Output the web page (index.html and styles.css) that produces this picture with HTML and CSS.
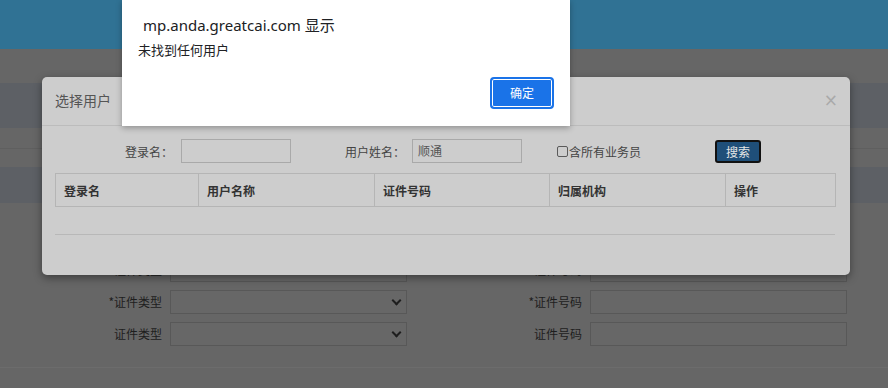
FILE: index.html
```html
<!DOCTYPE html>
<html lang="zh-CN">
<head>
  <meta charset="UTF-8">
  <title>选择用户</title>
  <link rel="stylesheet" href="styles.css">
</head>
<body>
  <div class="topbar"></div>

  <div class="page">
    <div class="band gap-top"></div>
    <div class="band tinted tall"></div>
    <div class="band short"></div>
    <div class="band mid"></div>
    <div class="band tinted mid2"></div>

    <div class="form-grid">
      <label class="lbl">证件类型</label>
      <div class="select"><span class="chev"></span></div>
      <label class="lbl">证件号码</label>
      <div class="field"></div>

      <label class="lbl">*证件类型</label>
      <div class="select"><span class="chev"></span></div>
      <label class="lbl">*证件号码</label>
      <div class="field"></div>

      <label class="lbl">证件类型</label>
      <div class="select"><span class="chev"></span></div>
      <label class="lbl">证件号码</label>
      <div class="field"></div>
    </div>

    <div class="footer-line"></div>
  </div>

  <!-- modal: select user -->
  <div class="modal">
    <div class="modal-head">
      <span class="modal-title">选择用户</span>
      <span class="modal-close">×</span>
    </div>
    <div class="modal-body">
      <div class="search-row">
        <span class="s-label s-login">登录名：</span>
        <span class="s-input"></span>
        <span class="s-label s-name">用户姓名：</span>
        <span class="s-input">顺通</span>
        <span class="s-check"><span class="box"></span>含所有业务员</span>
        <span class="s-btn">搜索</span>
      </div>
      <table class="grid">
        <colgroup>
          <col class="c1">
          <col class="c2">
          <col class="c3">
          <col class="c4">
          <col class="c5">
        </colgroup>
        <thead>
          <tr>
            <th>登录名</th>
            <th>用户名称</th>
            <th>证件号码</th>
            <th>归属机构</th>
            <th>操作</th>
          </tr>
        </thead>
      </table>
      <div class="pager"></div>
    </div>
  </div>

  <!-- browser alert -->
  <div class="alert">
    <div class="alert-title">mp.anda.greatcai.com 显示</div>
    <div class="alert-msg">未找到任何用户</div>
    <div class="alert-foot">
      <span class="alert-btn">确定</span>
    </div>
  </div>
</body>
</html>
```

FILE: styles.css
```css
body {
  margin: 0;
  background: #666666;
  font-family: "Noto Sans CJK SC", "Noto Sans", sans-serif;
  font-size: 12px;
  color: #222;
  overflow: hidden;
}

.topbar {
  height: 49px;
  background: #307294;
}

.page {
  position: relative;
  height: 339px;
}

.band {
  background: #666666;
}

.gap-top { height: 34px; }
.tinted { background: #5d6065; }
.tall { height: 45px; }
.short { height: 20px; border-bottom: 1px solid #5f5f5f; }
.mid { height: 18px; }
.mid2 { height: 36px; }

.form-grid {
  display: grid;
  grid-template-columns: 162px 237px 167px 257px;
  grid-auto-rows: 24px;
  column-gap: 8px;
  row-gap: 8px;
  margin-top: 55px;
}

.lbl {
  text-align: right;
  line-height: 24px;
  font-size: 12px;
  color: #1e1e1e;
}

.select,
.field {
  position: relative;
  box-sizing: border-box;
  border: 1px solid #585858;
  background: #676767;
}

.chev {
  position: absolute;
  right: 6px;
  top: 6px;
  width: 5px;
  height: 5px;
  border-right: 2px solid #1e1e1e;
  border-bottom: 2px solid #1e1e1e;
  transform: rotate(45deg);
}

.footer-line {
  margin-top: 21px;
  height: 1px;
  background: #6c6c6c;
}

/* modal */
.modal {
  position: absolute;
  left: 42px;
  top: 77px;
  width: 808px;
  height: 198px;
  background: #cdcdcd;
  border-radius: 5px;
  box-shadow: 0 3px 9px rgba(0, 0, 0, 0.4);
}

.modal-head {
  height: 48px;
  border-bottom: 1px solid #bcbcbc;
  display: flex;
  align-items: center;
  justify-content: space-between;
  padding: 0 13px;
}

.modal-title {
  font-size: 14px;
  color: #555;
  margin-top: -2px;
}

.modal-close {
  font-size: 17px;
  color: #a9a9a9;
  font-family: "DejaVu Sans", sans-serif;
  margin-right: -1px;
  margin-top: -3px;
}

.modal-body {
  padding: 13px 13px 0;
}

.search-row {
  display: flex;
  align-items: center;
  height: 24px;
}

.s-label {
  color: #444;
  font-size: 12px;
  text-align: right;
}

.s-login {
  width: 118px;
  margin-right: 8px;
}

.s-name {
  width: 60px;
  margin-left: 54px;
  margin-right: 7px;
}

.s-input {
  box-sizing: border-box;
  width: 110px;
  height: 24px;
  border: 1px solid #a9a9a9;
  padding-left: 5px;
  line-height: 22px;
  color: #555;
}

.s-check {
  display: flex;
  align-items: center;
  margin-left: 35px;
  color: #444;
  font-size: 12px;
}

.box {
  box-sizing: border-box;
  width: 11px;
  height: 11px;
  border: 1px solid #5a5a5a;
  border-radius: 2px;
  margin-right: 1px;
}

.s-btn {
  box-sizing: border-box;
  margin-left: 74px;
  width: 46px;
  height: 23px;
  background: #1f4f79;
  border: 2px solid #111;
  border-radius: 3px;
  color: #e6e6e6;
  font-size: 12px;
  line-height: 19px;
  text-align: center;
}

.grid {
  margin-top: 10px;
  width: 780px;
  border-collapse: collapse;
  table-layout: fixed;
}

.grid th {
  height: 32px;
  padding: 0 0 0 8px;
  border: 1px solid #b5b5b5;
  text-align: left;
  font-size: 12px;
  font-weight: bold;
  color: #333;
}

.c1 { width: 143px; }
.c2 { width: 176px; }
.c3 { width: 175px; }
.c4 { width: 176px; }
.c5 { width: 110px; }

.pager {
  margin-top: 27px;
  width: 780px;
  border-top: 1px solid #b8b8b8;
}

/* browser alert */
.alert {
  position: absolute;
  left: 122px;
  top: 0;
  width: 448px;
  height: 126px;
  background: #ffffff;
  box-shadow: 0 2px 6px rgba(0, 0, 0, 0.3);
  color: #202124;
}

.alert-title {
  padding: 14px 0 0 21px;
  font-family: "Noto Sans", "Noto Sans CJK SC", sans-serif;
  font-size: 15px;
  line-height: 22px;
}

.alert-msg {
  padding: 5px 0 0 16px;
  font-size: 13px;
  line-height: 18px;
}

.alert-foot {
  display: flex;
  justify-content: flex-end;
  padding: 18px 16px 0 0;
}

.alert-btn {
  box-sizing: border-box;
  width: 64px;
  height: 32px;
  background: #1a73e8;
  border-radius: 4px;
  border: 2px solid #1a73e8;
  box-shadow: inset 0 0 0 1px #ffffff;
  color: #fff;
  font-size: 12px;
  line-height: 28px;
  text-align: center;
}
```
